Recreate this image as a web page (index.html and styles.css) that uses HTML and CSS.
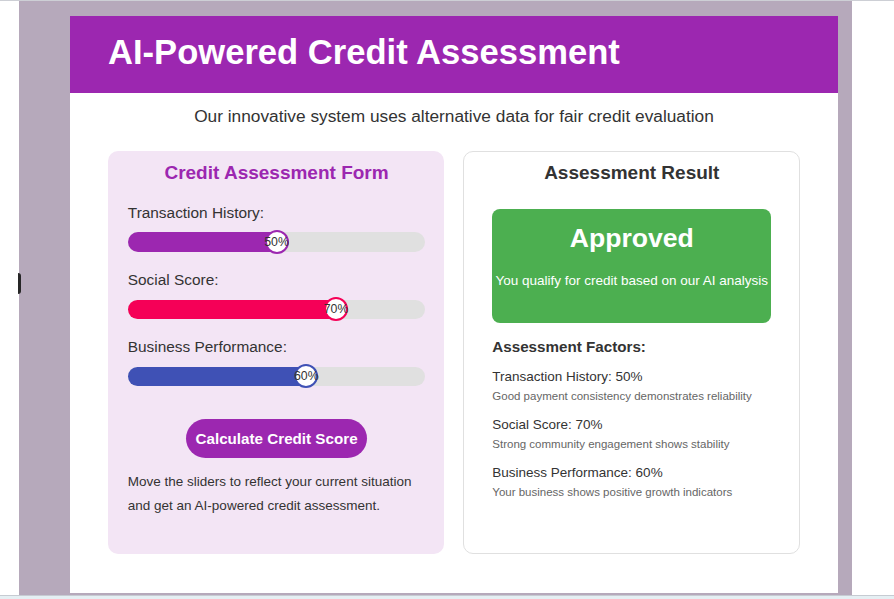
FILE: index.html
```html
<!DOCTYPE html>
<html lang="en">
<head>
<meta charset="utf-8">
<title>AI-Powered Credit Assessment</title>
<link rel="stylesheet" href="styles.css">
</head>
<body>
<div class="topline"></div>
<div class="frame">
  <div class="gutter-left"><span class="side-tab"></span></div>
  <div class="stage">
    <div class="app">
      <header class="app-header">
        <h1 class="app-title">AI-Powered Credit Assessment</h1>
      </header>
      <main class="app-body">
        <p class="subtitle">Our innovative system uses alternative data for fair credit evaluation</p>
        <div class="cards">
          <section class="card form-card">
            <h2 class="form-title">Credit Assessment Form</h2>
            <div class="slider-group">
              <div class="slider-label">Transaction History:</div>
              <div class="track">
                <div class="fill fill-purple" style="width:50%"></div>
                <div class="thumb thumb-purple" style="left:50%">50%</div>
              </div>
            </div>
            <div class="slider-group">
              <div class="slider-label">Social Score:</div>
              <div class="track">
                <div class="fill fill-pink" style="width:70%"></div>
                <div class="thumb thumb-pink" style="left:70%">70%</div>
              </div>
            </div>
            <div class="slider-group last">
              <div class="slider-label">Business Performance:</div>
              <div class="track">
                <div class="fill fill-blue" style="width:60%"></div>
                <div class="thumb thumb-blue" style="left:60%">60%</div>
              </div>
            </div>
            <div class="btn-row"><button class="calc-btn">Calculate Credit Score</button></div>
            <p class="hint">Move the sliders to reflect your current situation and get an AI-powered credit assessment.</p>
          </section>
          <section class="card result-card">
            <h2 class="result-title">Assessment Result</h2>
            <div class="verdict">
              <div class="verdict-main">Approved</div>
              <div class="verdict-sub">You qualify for credit based on our AI analysis</div>
            </div>
            <h3 class="factors-title">Assessment Factors:</h3>
            <div class="factor">
              <div class="factor-name">Transaction History: 50%</div>
              <div class="factor-desc">Good payment consistency demonstrates reliability</div>
            </div>
            <div class="factor">
              <div class="factor-name">Social Score: 70%</div>
              <div class="factor-desc">Strong community engagement shows stability</div>
            </div>
            <div class="factor">
              <div class="factor-name">Business Performance: 60%</div>
              <div class="factor-desc">Your business shows positive growth indicators</div>
            </div>
          </section>
        </div>
      </main>
    </div>
  </div>
  <div class="gutter-right"></div>
</div>
<div class="bottombar"></div>
</body>
</html>
```
FILE: styles.css
```css
* { box-sizing: border-box; }
html, body { margin: 0; padding: 0; }
body {
  background: #ffffff;
  font-family: "Liberation Sans", Arial, sans-serif;
  color: #333333;
  width: 894px;
  height: 599px;
  overflow: hidden;
}
.topline { height: 1px; background: #cdcfd5; }
.frame { display: flex; height: 594px; }
.gutter-left { width: 19px; background: #ffffff; position: relative; }
.side-tab {
  position: absolute; left: 18px; top: 272px;
  width: 3px; height: 21px; background: #262626;
  border-radius: 0 3px 3px 0;
}
.gutter-right { flex: 1; background: #ffffff; }
.stage {
  width: 833px;
  background: #b6a9bb;
  padding: 15px 14px 2px 51px;
}
.app { width: 768px; height: 100%; display: flex; flex-direction: column; background: #ffffff; }
.app-header {
  background: #9c27b0;
  height: 77px;
  padding: 16px 38px 0;
}
.app-title {
  margin: 0;
  color: #ffffff;
  font-size: 34.6px;
  line-height: 40px;
  font-weight: bold;
}
.app-body { flex: 1; padding: 13px 38px 0; }
.subtitle {
  margin: 0;
  text-align: center;
  font-size: 17.3px;
  line-height: 20px;
  color: #333333;
}
.cards {
  margin-top: 25px;
  display: grid;
  grid-template-columns: 336px 337px;
  column-gap: 19px;
  padding-left: 0.3px;
}
.card { height: 403px; border-radius: 10px; }
.form-card { background: #f3e5f5; padding: 9.5px 19px 0 19.5px; }
.form-title {
  margin: 0 0 18.7px;
  text-align: center;
  color: #9c27b0;
  font-size: 19px;
  line-height: 24px;
  font-weight: bold;
}
.slider-group { margin-bottom: 18.4px; }
.slider-group.last { margin-bottom: 33px; }
.slider-label { font-size: 15.4px; line-height: 20px; color: #333333; margin-bottom: 9.3px; }
.track {
  position: relative;
  height: 19.4px;
  background: #e0e0e0;
  border-radius: 10px;
}
.fill { height: 100%; border-radius: 10px 0 0 10px; }
.fill-purple { background: #9c27b0; }
.fill-pink { background: #f50057; }
.fill-blue { background: #3f51b5; }
.thumb {
  position: absolute;
  top: 50%;
  width: 24px; height: 24px;
  transform: translate(-50%, -50%);
  border-radius: 50%;
  background: #ffffff;
  border: 2px solid;
  display: flex; align-items: center; justify-content: center;
  font-size: 12.3px;
  color: #333333;
  white-space: nowrap;
}
.thumb-purple { border-color: #9c27b0; }
.thumb-pink { border-color: #f50057; }
.thumb-blue { border-color: #3f51b5; }
.btn-row { display: flex; justify-content: center; }
.calc-btn {
  height: 39px;
  padding: 0 9.7px;
  border: none;
  border-radius: 20px;
  background: #9c27b0;
  color: #ffffff;
  font-family: "Liberation Sans", Arial, sans-serif;
  font-size: 15.2px;
  font-weight: bold;
}
.hint {
  margin: 12px 0 0;
  font-size: 13.5px;
  line-height: 24.3px;
  color: #333333;
}
.result-card {
  background: #ffffff;
  border: 1px solid #e0e0e0;
  padding: 8.5px 28px 0;
}
.result-title {
  margin: 0 0 24.5px;
  text-align: center;
  font-size: 19px;
  line-height: 24px;
  font-weight: bold;
  color: #333333;
}
.verdict {
  height: 114px;
  background: #4caf50;
  border-radius: 8px;
  padding-top: 12.6px;
  color: #ffffff;
  text-align: center;
}
.verdict-main { font-size: 26.6px; line-height: 32px; font-weight: bold; margin-bottom: 17px; }
.verdict-sub { font-size: 13.5px; line-height: 20px; white-space: nowrap; }
.factors-title {
  margin: 14px 0 10.7px;
  font-size: 15.2px;
  line-height: 20px;
  font-weight: bold;
  color: #333333;
}
.factor { margin-bottom: 12.3px; }
.factor-name { font-size: 13.5px; line-height: 18px; color: #333333; }
.factor-desc { margin-top: 2px; font-size: 11.5px; line-height: 16px; color: #666666; }
.bottombar { height: 4px; border-top: 1px solid #c6cbd2; background: #e5eff3; }
```
